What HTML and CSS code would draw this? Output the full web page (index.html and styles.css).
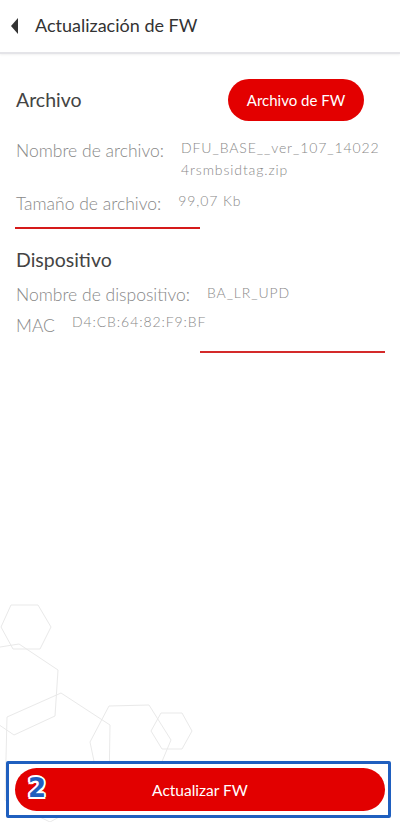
FILE: index.html
```html
<!DOCTYPE html>
<html lang="es">
<head>
<meta charset="utf-8">
<title>Actualización de FW</title>
<link rel="stylesheet" href="styles.css">
</head>
<body>
<div class="screen">
  <header class="topbar">
    <svg class="back" width="8" height="16" viewBox="0 0 8 16"><polygon points="7,0 7,16 0,8" fill="#333"/></svg>
    <h1 class="title">Actualización de FW</h1>
  </header>

  <main class="content">
    <section class="section">
      <div class="section-head">
        <h2 class="section-title">Archivo</h2>
        <button class="pill-btn">Archivo de FW</button>
      </div>
      <div class="row row-name">
        <span class="label">Nombre de archivo:</span>
        <span class="value value-wrap">DFU_BASE__ver_107_14022<wbr>4rsmbsidtag.zip</span>
      </div>
      <div class="row row-size">
        <span class="label">Tamaño de archivo:</span>
        <span class="value">99,07 Kb</span>
      </div>
      <div class="rule rule-left"></div>
    </section>

    <section class="section section-dev">
      <h2 class="section-title">Dispositivo</h2>
      <div class="row row-dev">
        <span class="label">Nombre de dispositivo:</span>
        <span class="value value-up">BA_LR_UPD</span>
      </div>
      <div class="row row-mac">
        <span class="label">MAC</span>
        <span class="value">D4:CB:64:82:F9:BF</span>
      </div>
      <div class="rule rule-right"></div>
    </section>
  </main>

  <svg class="hexes" width="400" height="260" viewBox="0 562 400 260" fill="none" stroke="#e9e9e9" stroke-width="1">
    <polygon points="1,627 11,605 38,605 51,627 40,649 13,649"/>
    <polygon points="-6,648 19,644 58,670 55,716 14,735 -8,720"/>
    <polygon points="7,717 61,693 110,725 109,790 50,822 5,800"/>
    <polygon points="90,742 109,706 149,705 171,740 150,790 100,790"/>
    <polygon points="151,731 161,713 182,713 192,731 182,749 162,749"/>
  </svg>

  <footer class="footer">
    <div class="highlight">
      <span class="step">2</span>
      <button class="main-btn">Actualizar FW</button>
    </div>
  </footer>
</div>
</body>
</html>
```

FILE: styles.css
```css
* { box-sizing: border-box; }
html, body { margin: 0; padding: 0; }
body {
  font-family: Lato, "Open Sans", "Liberation Sans", sans-serif;
  background: #fff;
  color: #444;
}
.screen {
  position: relative;
  width: 400px;
  height: 822px;
  display: flex;
  flex-direction: column;
  overflow: hidden;
  background: #fff;
}
.topbar {
  height: 54px;
  display: flex;
  align-items: center;
  gap: 16px;
  padding: 0 0 2px 11px;
  border-bottom: 2px solid #e4e4e8;
  box-shadow: 0 1px 2px rgba(0,0,0,0.06);
  flex: none;
  position: relative;
  z-index: 1;
}
.back { flex: none; margin-top: 1px; }
.title {
  margin: 0;
  font-size: 18px;
  font-weight: 400;
  color: #333;
  letter-spacing: 0;
}
.content {
  flex: 1;
  padding: 0 15px 0 16px;
  position: relative;
  z-index: 1;
}
.section-head {
  display: flex;
  align-items: center;
  justify-content: space-between;
  margin-top: 25px;
  padding-right: 21px;
}
.section-title {
  margin: 0;
  font-size: 19.5px;
  line-height: 26px;
  font-weight: 400;
  color: #444;
}
.pill-btn {
  width: 136px;
  height: 42px;
  border: none;
  border-radius: 21px;
  background: #e30000;
  color: #fff;
  font-family: inherit;
  font-size: 15px;
  font-weight: 400;
  padding: 0;
}
.row {
  display: flex;
  align-items: flex-start;
  gap: 17px;
}
.label {
  flex: none;
  font-size: 17.5px;
  font-weight: 300;
  color: #888;
  line-height: 22px;
}
.value {
  font-size: 14px;
  font-weight: 300;
  color: #888;
  line-height: 22px;
  letter-spacing: 0.9px;
  margin-top: -3px;
}
.row-name { margin-top: 19px; }
.row-size { margin-top: 12px; }
.rule {
  height: 2px;
  background: #d51a1a;
}
.rule-left { width: 185px; margin-left: -1px; margin-top: 12px; }
.section-dev .section-title { margin-top: 18px; }
.row-dev { margin-top: 11px; }
.value-up { margin-top: -2px; }
.row-mac { margin-top: 9px; }
.row-mac .value { margin-top: -4px; }
.rule-right {
  width: 185px;
  margin-left: 184px;
  margin-top: 14px;
  height: 1.5px;
  background: #d42a2a;
}
.hexes {
  position: absolute;
  left: 0;
  top: 562px;
  z-index: 0;
}
.footer {
  flex: none;
  padding: 0 9px 4px 6px;
  position: relative;
  z-index: 1;
}
.highlight {
  position: relative;
  border: 3px solid #1f5fbf;
  border-radius: 2px;
  padding: 4px 3px 4px 6px;
  background: #fff;
}
.main-btn {
  display: block;
  width: 100%;
  height: 43px;
  border: none;
  border-radius: 22px;
  background: #e20000;
  color: #fff;
  font-family: inherit;
  font-size: 15.5px;
  padding: 0;
}
.step {
  position: absolute;
  left: 19px;
  top: 9px;
  font-family: "DejaVu Sans", sans-serif;
  font-weight: 700;
  font-size: 26px;
  color: #1f5fbf;
  line-height: 30px;
  z-index: 2;
  text-shadow: 2px 0 0 #fff, -2px 0 0 #fff, 0 2px 0 #fff, 0 -2px 0 #fff,
    1.5px 1.5px 0 #fff, -1.5px 1.5px 0 #fff, 1.5px -1.5px 0 #fff, -1.5px -1.5px 0 #fff;
}
```
